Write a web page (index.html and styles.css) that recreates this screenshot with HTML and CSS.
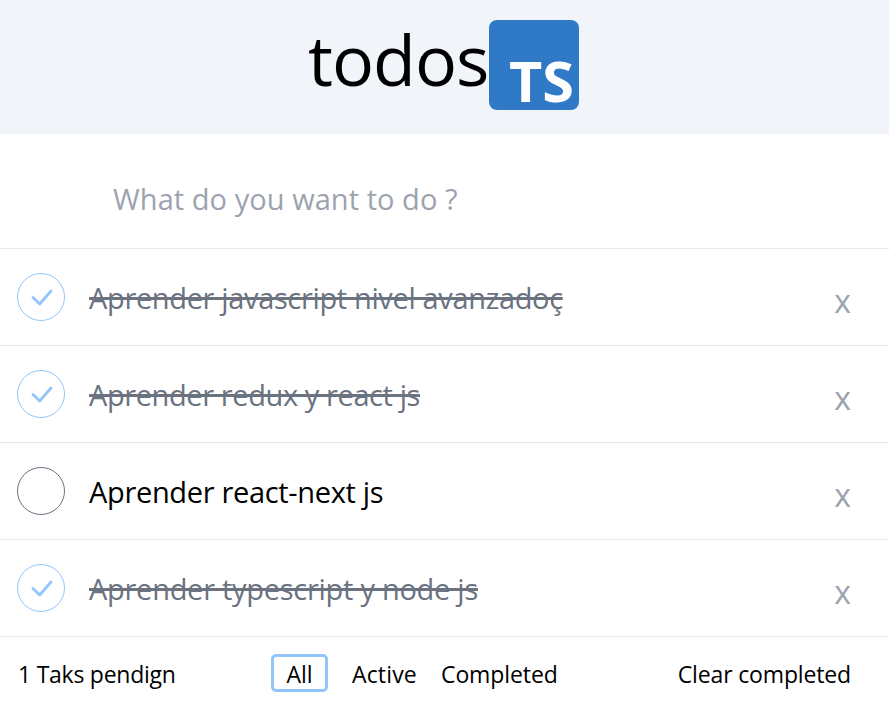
FILE: index.html
```html
<!DOCTYPE html>
<html lang="en">
<head>
<meta charset="utf-8">
<title>todos</title>
<link rel="stylesheet" href="styles.css">
</head>
<body>
<header class="header">
  <h1 class="title">todos</h1>
  <svg class="logo" viewBox="0 0 90 90" role="img" aria-label="TS">
    <rect width="90" height="90" rx="8" fill="#2f79c7"/>
    <text class="logo-text" x="20" y="82" textLength="65" lengthAdjust="spacingAndGlyphs">TS</text>
  </svg>
</header>
<main>
  <div class="entry"><span class="placeholder">What do you want to do ?</span></div>
  <ul class="list">
    <li class="todo done">
      <span class="check"><svg viewBox="0 0 48 48"><path d="M16 24.5L22.7 31L34 18"/></svg></span>
      <span class="label l1">Aprender javascript nivel avanzadoç</span><span class="remove">x</span>
    </li>
    <li class="todo done">
      <span class="check"><svg viewBox="0 0 48 48"><path d="M16 24.5L22.7 31L34 18"/></svg></span>
      <span class="label l2">Aprender redux y react js</span><span class="remove">x</span>
    </li>
    <li class="todo">
      <span class="check"></span>
      <span class="label l3">Aprender react-next js</span><span class="remove">x</span>
    </li>
    <li class="todo done">
      <span class="check"><svg viewBox="0 0 48 48"><path d="M16 24.5L22.7 31L34 18"/></svg></span>
      <span class="label l4">Aprender typescript y node js</span><span class="remove">x</span>
    </li>
  </ul>
</main>
<footer class="footer">
  <span class="count">1 Taks pendign</span>
  <nav class="filters">
    <span class="filter selected">All</span>
    <span class="filter active">Active</span>
    <span class="filter completed">Completed</span>
  </nav>
  <span class="clear">Clear completed</span>
</footer>
</body>
</html>
```
FILE: styles.css
```css
* { box-sizing: border-box; }
body {
  margin: 0;
  background: #fff;
  color: #000;
  font-family: "Open Sans", "Noto Sans", sans-serif;
  font-size: 29px;
  white-space: nowrap;
}
.header {
  display: flex;
  height: 134px;
  padding: 20px 0 0 308px;
  background: #f1f5f9;
}
.title {
  width: 181px;
  margin: 0;
  font-size: 70px;
  font-weight: 400;
  line-height: 78px;
  letter-spacing: -1px;
}
.logo { width: 90px; height: 90px; overflow: visible; }
.logo-text { fill: #fff; font-size: 55px; font-weight: 700; }
.entry {
  height: 115px;
  padding: 44px 0 0 113px;
  border-bottom: 1px solid #e5e7eb;
  line-height: 42px;
  letter-spacing: 0.05px;
  color: #9ca3af;
}
.list { margin: 0; padding: 0; list-style: none; }
.todo {
  display: flex;
  height: 97px;
  padding: 24px 38px 0 17px;
  border-bottom: 1px solid #e5e7eb;
  line-height: 50px;
}
.check {
  width: 48px;
  height: 48px;
  margin-right: 24px;
  border: 1px solid #6b7280;
  border-radius: 50%;
}
.check svg { display: block; width: 48px; height: 48px; margin: -1px; }
.check path {
  fill: none;
  stroke: #93c5fd;
  stroke-width: 2.8;
  stroke-linecap: round;
  stroke-linejoin: round;
}
.done .check { border-color: #93c5fd; }
.label { height: 50px; }
.l1 { letter-spacing: -0.35px; }
.l2 { letter-spacing: -0.4px; }
.l3 { letter-spacing: -0.33px; }
.l4 { letter-spacing: -0.27px; }
.done .label { color: #6b7280; text-decoration: line-through 3px; }
.remove {
  margin-left: auto;
  padding-top: 3px;
  font-size: 32px;
  color: #9ca3af;
}
.footer {
  display: flex;
  height: 68px;
  padding: 17px 38px 0 18px;
  font-size: 23px;
  line-height: 41px;
}
.count { width: 253px; letter-spacing: -0.25px; }
.filters { display: flex; }
.selected {
  width: 57px;
  height: 38px;
  margin-right: 24px;
  border: 3px solid #93c5fd;
  border-radius: 5px;
  line-height: 35px;
  text-align: center;
}
.active { width: 89px; letter-spacing: 0.15px; }
.completed { letter-spacing: -0.1px; }
.clear { margin-left: auto; letter-spacing: -0.15px; }
```
